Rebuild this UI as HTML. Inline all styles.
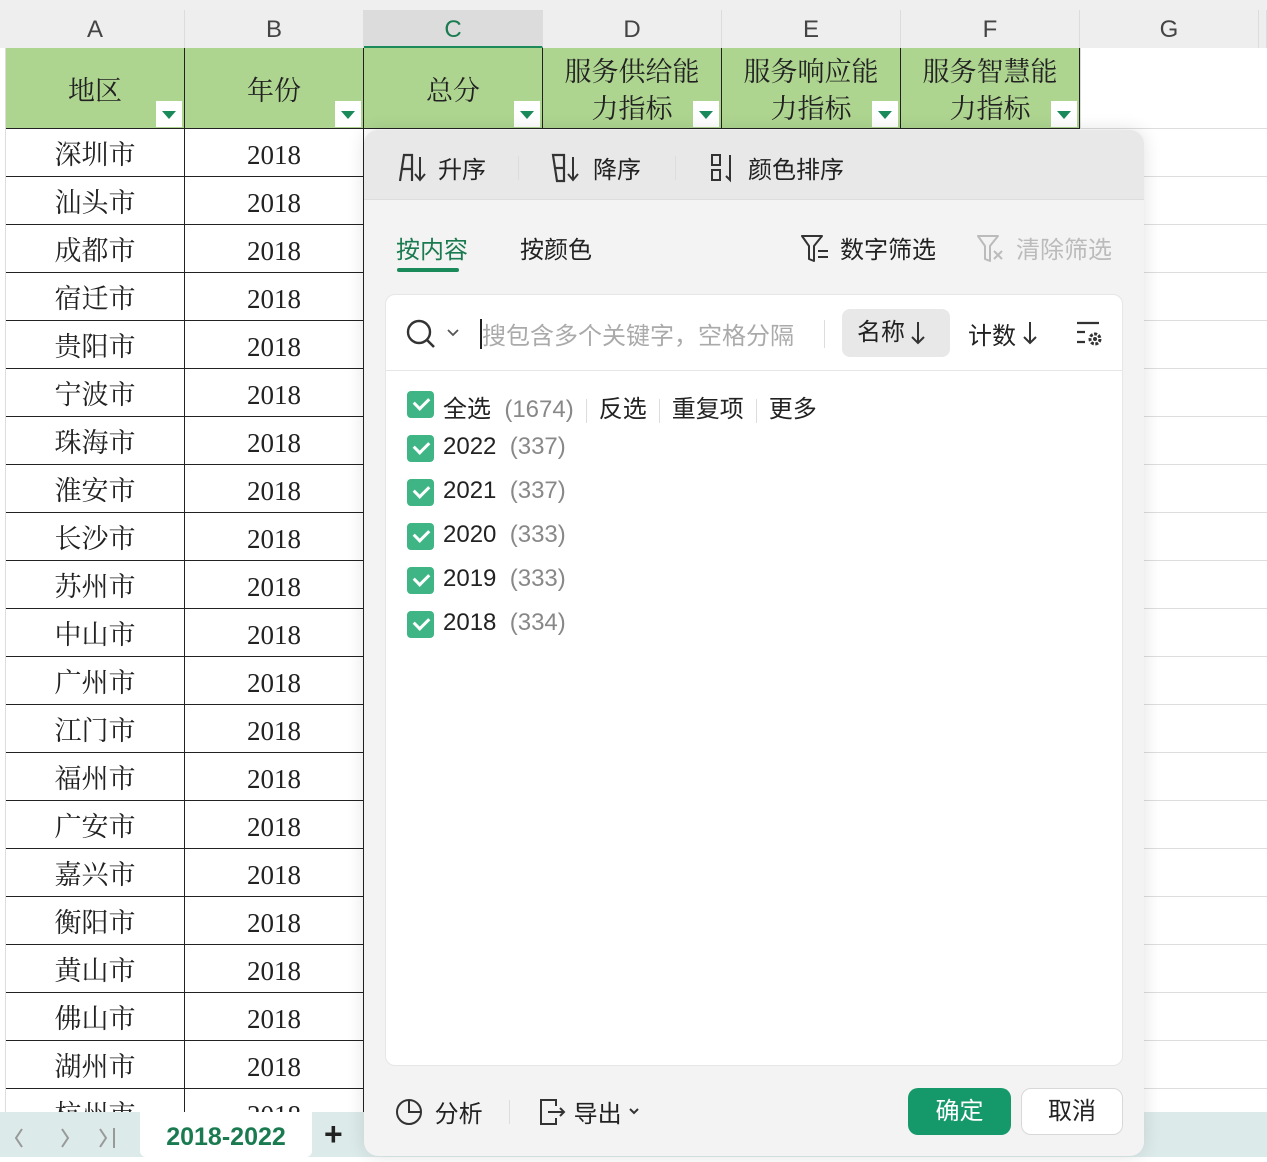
<!DOCTYPE html>
<html><head><meta charset="utf-8"><style>
*{margin:0;padding:0;box-sizing:border-box}
body{width:1267px;height:1157px;overflow:hidden;background:#fff;position:relative;font-family:"Liberation Sans","Noto Sans CJK SC",sans-serif}
.abs{position:absolute}
.colh{position:absolute;top:10px;height:38px;background:#eeeeee;border-right:1px solid #dcdcdc;font-size:24px;color:#444;text-align:center;line-height:40px}
.hc{position:absolute;top:48px;height:81px;background:#aed590;border-right:1.5px solid #222;border-bottom:1.5px solid #222;font-family:"Liberation Serif","Noto Serif CJK SC",serif;font-size:27px;color:#222;text-align:center;line-height:37px;display:flex;align-items:center;justify-content:center;padding-top:6px}
.dd{position:absolute;right:2px;bottom:1px;width:26px;height:26px;background:#fff}
.dd:after{content:"";position:absolute;left:6px;top:10px;border-left:7px solid transparent;border-right:7px solid transparent;border-top:8px solid #1a8a5a}
.cell{position:absolute;height:48px;border-right:1.5px solid #222;border-bottom:1.5px solid #222;font-family:"Liberation Serif","Noto Serif CJK SC",serif;font-size:27px;color:#222;text-align:center;line-height:52px}
.gl{position:absolute;left:1143px;width:124px;height:1px;background:#ddd}
.cb{position:absolute;left:407px;width:27px;height:27px;background:#3fb585;border-radius:4px}
.cb:after{content:"";position:absolute;left:7px;top:6px;width:12px;height:7px;border-left:3px solid #fff;border-bottom:3px solid #fff;transform:rotate(-45deg)}
.it{position:absolute;left:443px;font-size:24px;color:#222}
.it span{color:#888}
.sep{display:inline-block;width:1px;height:24px;background:#ddd;vertical-align:middle;margin:0 12px}
</style></head><body>
<div class="abs" style="left:0;top:0;width:1267px;height:10px;background:#efefef"></div>
<div class="abs" style="left:0;top:10px;width:6px;height:38px;background:#eee"></div>
<div class="colh" style="left:6px;width:179px">A</div>
<div class="colh" style="left:185px;width:179px">B</div>
<div class="colh" style="left:364px;width:179px;background:#dcdcdc;color:#1a7a50;border-bottom:2px solid #1e8a5a">C</div>
<div class="colh" style="left:543px;width:179px">D</div>
<div class="colh" style="left:722px;width:179px">E</div>
<div class="colh" style="left:901px;width:179px">F</div>
<div class="colh" style="left:1080px;width:179px">G</div>
<div class="colh" style="left:1259px;width:8px"></div>
<div class="abs" style="left:0;top:48px;width:6px;height:1109px;background:#fff;border-right:1px solid #ddd"></div>

<div class="hc" style="left:6px;width:179px">地区<div class="dd"></div></div>
<div class="hc" style="left:185px;width:179px">年份<div class="dd"></div></div>
<div class="hc" style="left:364px;width:179px">总分<div class="dd"></div></div>
<div class="hc" style="left:543px;width:179px">服务供给能<br>力指标<div class="dd"></div></div>
<div class="hc" style="left:722px;width:179px">服务响应能<br>力指标<div class="dd"></div></div>
<div class="hc" style="left:901px;width:179px">服务智慧能<br>力指标<div class="dd"></div></div>
<div class="abs" style="left:1080px;top:48px;width:1px;height:81px;background:#ddd"></div>
<div class="abs" style="left:1080px;top:128px;width:187px;height:1px;background:#ddd"></div>

<div id="rows"></div>
<script>
var c=["深圳市","汕头市","成都市","宿迁市","贵阳市","宁波市","珠海市","淮安市","长沙市","苏州市","中山市","广州市","江门市","福州市","广安市","嘉兴市","衡阳市","黄山市","佛山市","湖州市","杭州市"];
var h="";
for(var i=0;i<c.length;i++){var t=129+i*48;
h+='<div class="cell" style="left:6px;top:'+t+'px;width:179px">'+c[i]+'</div><div class="cell" style="left:185px;top:'+t+'px;width:179px">2018</div><div class="cell" style="left:364px;top:'+t+'px;width:10px;border-right:none"></div><div class="gl" style="top:'+(t+47)+'px"></div>';}
document.getElementById("rows").innerHTML=h;
</script>

<div class="abs" style="left:0;top:1112px;width:1267px;height:45px;background:#dcebea"></div>
<svg class="abs" style="left:10px;top:1126px" width="120" height="24" viewBox="0 0 120 24"><path d="M12 3 L6 12 L12 21" stroke="#999" stroke-width="2" fill="none"/><path d="M52 3 L58 12 L52 21" stroke="#999" stroke-width="2" fill="none"/><path d="M90 3 L96 12 L90 21 M104 2 V22" stroke="#999" stroke-width="2" fill="none"/></svg>
<div class="abs" style="left:140px;top:1112px;width:172px;height:45px;background:#fff;border-radius:0 0 6px 6px;text-align:center;line-height:50px;font-size:25px;font-weight:bold;color:#1a7a50">2018-2022</div>
<div class="abs" style="left:324px;top:1116px;font-size:32px;font-weight:bold;color:#222">+</div>

<div class="abs" style="left:364px;top:130px;width:780px;height:1026px;background:#f3f3f3;border-radius:14px;box-shadow:0 0 18px rgba(0,0,0,.12);overflow:hidden">
 <div class="abs" style="left:0;top:0;width:780px;height:70px;background:#e8e8e8;border-bottom:1px solid #ddd"></div>
 <div class="abs" style="left:34px;top:20px;font-size:24px;color:#222;display:flex;align-items:center">
  <svg width="40" height="30" viewBox="0 0 40 30"><path d="M2 28 L6 2 H14 V28 M4 16 H14" stroke="#333" stroke-width="2.2" fill="none"/><path d="M22 4 V26 M17 21 L22 27 L27 21" stroke="#333" stroke-width="2" fill="none"/></svg>升序
  <span class="sep" style="margin:0 32px"></span>
  <svg width="42" height="30" viewBox="0 0 42 30"><path d="M2 2 H13 V28 H6 Z M4 15 H13" stroke="#333" stroke-width="2.2" fill="none"/><path d="M22 4 V26 M17 21 L22 27 L27 21" stroke="#333" stroke-width="2" fill="none"/></svg>降序
  <span class="sep" style="margin:0 34px"></span>
  <svg width="38" height="30" viewBox="0 0 38 30"><rect x="2" y="2" width="8" height="10" stroke="#333" stroke-width="2" fill="none"/><rect x="2" y="17" width="8" height="10" stroke="#333" stroke-width="2" fill="none"/><path d="M20 2 V27 L16 23" stroke="#333" stroke-width="2" fill="none"/></svg>颜色排序
 </div>
 <div class="abs" style="left:32px;top:100px;font-size:24px;color:#1a7a50">按内容</div>
 <div class="abs" style="left:33px;top:138px;width:62px;height:4px;border-radius:2px;background:#1a8a5a"></div>
 <div class="abs" style="left:156px;top:100px;font-size:24px;color:#222">按颜色</div>
 <div class="abs" style="left:436px;top:100px;font-size:24px;color:#222;display:flex;align-items:center">
  <svg width="40" height="30" viewBox="0 0 40 30"><path d="M2 3 H22 L14 13 V28 L9 26 V13 Z" stroke="#333" stroke-width="2" fill="none" stroke-linejoin="round"/><path d="M18 18 H28 M18 24 H28" stroke="#333" stroke-width="2"/></svg>数字筛选</div>
 <div class="abs" style="left:612px;top:100px;font-size:24px;color:#bbb;display:flex;align-items:center">
  <svg width="40" height="30" viewBox="0 0 40 30"><path d="M2 3 H22 L14 13 V28 L9 26 V13 Z" stroke="#bbb" stroke-width="2" fill="none" stroke-linejoin="round"/><path d="M18 18 L26 26 M26 18 L18 26" stroke="#bbb" stroke-width="2"/></svg>清除筛选</div>

 <div class="abs" style="left:21px;top:164px;width:738px;height:772px;background:#fff;border-radius:10px;border:1px solid #e6e6e6"></div>
 <div class="abs" style="left:22px;top:240px;width:736px;height:1px;background:#e6e6e6"></div>
 <svg class="abs" style="left:42px;top:189px" width="34" height="34" viewBox="0 0 34 34"><circle cx="13" cy="13" r="11" stroke="#333" stroke-width="2.4" fill="none"/><path d="M21 21 L28 28" stroke="#333" stroke-width="2.6"/></svg>
 <svg class="abs" style="left:82px;top:198px" width="14" height="10" viewBox="0 0 14 10"><path d="M2 2 L7 7 L12 2" stroke="#555" stroke-width="1.8" fill="none"/></svg>
 <div class="abs" style="left:116px;top:189px;width:1.5px;height:30px;background:#222"></div>
 <div class="abs" style="left:118px;top:186px;font-size:24px;color:#aaa">搜包含多个关键字，空格分隔</div>
 <div class="abs" style="left:460px;top:190px;width:1px;height:28px;background:#ddd"></div>
 <div class="abs" style="left:478px;top:179px;width:108px;height:48px;background:#e8e8e8;border-radius:8px;font-size:24px;color:#222;line-height:48px;padding-left:15px">名称</div>
 <svg class="abs" style="left:546px;top:190px" width="16" height="26" viewBox="0 0 16 26"><path d="M8 2 V23 M2 17 L8 23 L14 17" stroke="#333" stroke-width="2" fill="none"/></svg>
 <div class="abs" style="left:604px;top:186px;font-size:24px;color:#222">计数</div>
 <svg class="abs" style="left:658px;top:190px" width="16" height="26" viewBox="0 0 16 26"><path d="M8 2 V23 M2 17 L8 23 L14 17" stroke="#333" stroke-width="2" fill="none"/></svg>
 <svg class="abs" style="left:710px;top:190px" width="32" height="30" viewBox="0 0 32 30"><path d="M3 3 H25 M3 12 H11 M3 22 H11" stroke="#333" stroke-width="2.2"/><circle cx="21" cy="19" r="5" stroke="#333" stroke-width="3" fill="none" stroke-dasharray="3 1.5"/><circle cx="21" cy="19" r="2" fill="#333"/></svg>

 <div class="cb" style="left:43px;top:261px"></div>
 <div class="it" style="left:79px;top:259px">全选 <span>&nbsp;(1674)</span><span class="sep"></span>反选<span class="sep"></span>重复项<span class="sep"></span>更多</div>
 <div class="cb" style="left:43px;top:305px"></div><div class="it" style="left:79px;top:303px">2022 <span>&nbsp;(337)</span></div>
 <div class="cb" style="left:43px;top:349px"></div><div class="it" style="left:79px;top:347px">2021 <span>&nbsp;(337)</span></div>
 <div class="cb" style="left:43px;top:393px"></div><div class="it" style="left:79px;top:391px">2020 <span>&nbsp;(333)</span></div>
 <div class="cb" style="left:43px;top:437px"></div><div class="it" style="left:79px;top:435px">2019 <span>&nbsp;(333)</span></div>
 <div class="cb" style="left:43px;top:481px"></div><div class="it" style="left:79px;top:479px">2018 <span>&nbsp;(334)</span></div>

 <div class="abs" style="left:30px;top:964px;font-size:24px;color:#222;display:flex;align-items:center">
  <svg width="34" height="32" viewBox="0 0 34 32"><circle cx="15" cy="16" r="12" stroke="#333" stroke-width="2" fill="none"/><path d="M15 4 V16 H27" stroke="#333" stroke-width="2" fill="none"/></svg>&nbsp;分析
  <span class="sep" style="margin:0 26px"></span>
  <svg width="38" height="32" viewBox="0 0 38 32"><path d="M16 4 H5 V28 H16 M16 4 L20 4 V10 M20 22 V28 H16" stroke="#333" stroke-width="2" fill="none"/><path d="M12 16 H28 M24 12 L28 16 L24 20" stroke="#333" stroke-width="2" fill="none"/></svg>导出
  <svg width="22" height="12" viewBox="0 0 22 12"><path d="M8 3 L12 7 L16 3" stroke="#333" stroke-width="2" fill="none"/></svg>
 </div>
 <div class="abs" style="left:544px;top:958px;width:103px;height:47px;background:#15996a;border-radius:10px;color:#fff;font-size:24px;line-height:47px;text-align:center">确定</div>
 <div class="abs" style="left:657px;top:958px;width:102px;height:47px;background:#fff;border:1px solid #d8d8d8;border-radius:10px;color:#222;font-size:24px;line-height:45px;text-align:center">取消</div>
</div>
</body></html>
